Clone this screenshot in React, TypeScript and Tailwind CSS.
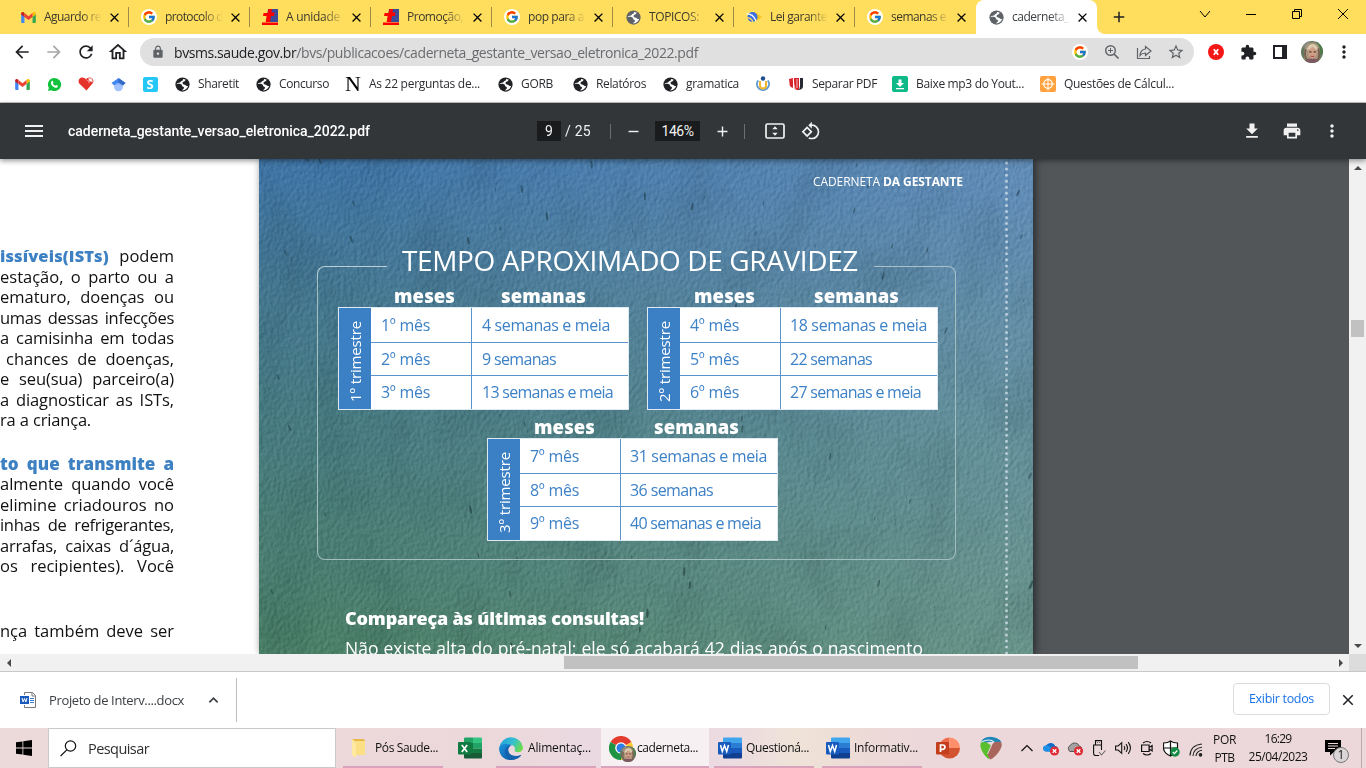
import { useLayoutEffect, useRef, useState, type ReactNode } from "react";
import {
  MdAdd, MdArrowBack, MdArrowForward, MdClose, MdExtension, MdFileDownload, MdLock, MdMenu,
  MdMoreVert, MdOutlineHome, MdPrint, MdRefresh, MdRemove, MdStarBorder,
} from "react-icons/md";
import { FcGoogle } from "react-icons/fc";

/* Text whose letter spacing is computed so that it fills a given width. */
function Fit({ w, className = "", children }: { w: number; className?: string; children: ReactNode }) {
  const ref = useRef<HTMLSpanElement>(null);
  const [spacing, setSpacing] = useState(0);
  useLayoutEffect(() => {
    const el = ref.current;
    if (!el) return;
    el.style.letterSpacing = "0px";
    const natural = el.getBoundingClientRect().width;
    const count = (el.textContent ?? "").length;
    setSpacing((w - natural) / Math.max(1, count));
    el.style.letterSpacing = `${(w - natural) / Math.max(1, count)}px`;
  }, [w]);
  return (
    <span ref={ref} className={`inline-block shrink-0 whitespace-pre ${className}`} style={{ letterSpacing: `${spacing}px` }}>
      {children}
    </span>
  );
}

function Slot({ className, children }: { className: string; children?: ReactNode }) {
  return <div className={`flex shrink-0 items-center justify-center ${className}`}>{children}</div>;
}

/* ---------- icons ---------- */
const Gmail = ({ className = "h-[11px] w-[15px]" }: { className?: string }) => (
  <svg viewBox="0 0 16 12" className={className}>
    <path d="M0 1.5V11a1 1 0 0 0 1 1h2.6V5z" fill="#4285f4" />
    <path d="M12.4 12H15a1 1 0 0 0 1-1V1.5L12.4 5z" fill="#34a853" />
    <path d="M12.4 1.2V5.4L16 2.7V1.6C16 .2 14.4-.5 13.3.4z" fill="#fbbc04" />
    <path d="M3.6 5.4V1.2L8 4.5l4.4-3.3v4.2L8 8.7z" fill="#ea4335" />
    <path d="M0 1.6v1.1l3.6 2.7V1.2L2.7.4C1.600-.5 0 .2 0 1.6z" fill="#c5221f" />
  </svg>
);
const Globe = ({ className = "h-[15px] w-[15px] text-[#202124]" }: { className?: string }) => (
  <svg viewBox="0 0 16 16" className={className}>
    <circle cx="8" cy="8" r="7.600" fill="currentColor" />
    <path d="M1.600 7.600c2-.5 4.400-.4 5.500.6.900.9.300 1.900 1.500 2.200 1.200.4 1.200 1.300.6 2-.6.6-1.200 1.100-1.700 1.900 3.200.2 5.900-2 6.600-5-1.300.5-2.400.1-3-.8-.7-.9-2.300-.4-2.900-1.400-.5-1.200.5-2.100 1.500-2.200.9-.2 1.100-1.300 1.900-1.900-1-.7-2.100-.9-3.200-.9.5 1.100-.2 1.900-1.500 2.200-1 .2-.5 1.400-1.700 1.600-1.500.3-2.900.3-3.600 1.700z" fill="#fff" />
  </svg>
);
const GoogleDisc = () => (
  <span className="flex h-4 w-4 items-center justify-center rounded-full bg-white"><FcGoogle className="h-[14px] w-[14px]" /></span>
);
const Library = () => (
  <svg viewBox="0 0 16 16" className="h-4 w-4">
    <path d="M6 0h10v13H4z" fill="#3c4a9a" />
    <path d="M6.500 0h3.500l-.5 3.500h3L12 7H9l-1 6H3.700l1-6H1l.6-3H5.700z" fill="#f00" />
    <path d="M0 13.500h16V16H0z" fill="#f00" />
  </svg>
);
const Planet = () => (
  <svg viewBox="0 0 16 16" className="h-4 w-4">
    <path d="M10 4l6 4-6 4z" fill="#f9c21c" />
    <circle cx="6.500" cy="8" r="5" fill="#3b6fe0" />
    <path d="M.5 5Q7 4.500 10 12" stroke="#fff" strokeWidth="1.300" fill="none" />
    <path d="M1 9q4-.5 6 4" stroke="#ffde5d" strokeWidth="1.200" fill="none" />
  </svg>
);
const WhatsApp = () => (
  <svg viewBox="0 0 16 16" className="h-[15px] w-[15px]">
    <path d="M8 1a7 7 0 0 0-6 10.600L1 15l3.500-1A7 7 0 1 0 8 1z" fill="#12c23c" />
    <path d="M5.300 4.300c.5-.4.900-.2 1.100.3l.5 1.200-.7 1q.9 1.900 2.800 2.600l.9-.9 1.600.8c.3.2.2 1.800-1.300 2.100C7.500 11.800 4 8.500 4.200 6c.1-.8.6-1.400 1.100-1.700z" fill="#fff" />
  </svg>
);
const Heart = () => (
  <svg viewBox="0 0 16 16" className="h-4 w-4">
    <path d="M8.500 14.500L1.200 7.500C-.5 5 1.200 1.500 4 1.500c2 0 3 .8 3.700 1.800Q9 1.500 12 1.500c3 .3 4.500 3.500 2.500 6z" fill="#e5322b" />
    <path d="M10.500 1.800l3.500 1 .8 3.200-3.800-.7z" fill="#fff" stroke="#e98b88" strokeWidth=".7" />
    <path d="M8 3.500l3.500 2.500-1.500 1" stroke="#f6b3b0" strokeWidth=".7" fill="none" />
  </svg>
);
const Scholar = () => (
  <svg viewBox="0 0 16 16" className="h-[15px] w-[15px]">
    <circle cx="8" cy="10.500" r="4.700" fill="#a0c3ff" />
    <path d="M8 1l7.500 5.500L12.500 9Q8 4 3.500 9L.5 6.500z" fill="#4285f4" />
    <path d="M8 1l7.500 5.500L12.500 9 8 6z" fill="#356ac3" />
    <path d="M3.500 9Q8 4.500 12.500 9q-4.500-2.500-9 0z" fill="#76a7fa" />
  </svg>
);
const Ship = () => (
  <svg viewBox="0 0 16 16" className="h-4 w-4">
    <path d="M3.200 4.500a6 6 0 1 0 9.600 0" fill="none" stroke="#5f9bd0" strokeWidth="2" />
    <path d="M5 5v4.500a3 3 0 0 0 6 0V5" stroke="#f2b52c" strokeWidth="1.900" fill="none" />
    <circle cx="8" cy="2.500" r="2.200" fill="#1f4f92" />
  </svg>
);
const RedBooks = () => (
  <svg viewBox="0 0 16 16" className="h-4 w-4">
    <path d="M1 3l4-1v10q-4-1-3.500-5zM6 2h5v12q-4 .5-5-2z" fill="#d8232a" />
    <path d="M12 2h3v9q-1 3-5 3 2-1 2-4z" fill="#252a33" />
    <path d="M5.200 3q.5 7 2 10M9 3v9" stroke="#fff" strokeWidth=".7" fill="none" />
  </svg>
);
const WordIcon = () => (
  <svg viewBox="0 0 24 24" className="h-6 w-6">
    <path d="M6 1.500h17a1 1 0 0 1 1 1v5H5v-5a1 1 0 0 1 1-1z" fill="#41a5ee" />
    <path d="M5 7h19v5H5z" fill="#2b7cd3" />
    <path d="M5 12h19v5H5z" fill="#185abd" />
    <path d="M5 17h19v4.500a1 1 0 0 1-1 1H6a1 1 0 0 1-1-1z" fill="#103f91" />
    <rect x="0" y="6" width="13" height="12.500" rx="1" fill="#185abd" />
    <path d="M2.500 9l1.800 6.500L6.500 9.500l2.200 6L10.500 9" stroke="#fff" strokeWidth="1.500" fill="none" />
  </svg>
);
const ExcelIcon = () => (
  <svg viewBox="0 0 24 24" className="h-6 w-6">
    <path d="M7 1.500h8v5.500H6V2.500a1 1 0 0 1 1-1z" fill="#21a366" />
    <path d="M15 1.500h8a1 1 0 0 1 1 1V7h-9z" fill="#33c481" />
    <path d="M6 7h9v10H6z" fill="#107c41" />
    <path d="M15 7h9v5.500h-9z" fill="#21a366" />
    <path d="M15 12.500h9V17h-9z" fill="#107c41" />
    <path d="M6 17h18v4.500a1 1 0 0 1-1 1H7a1 1 0 0 1-1-1z" fill="#185c37" />
    <rect x="0" y="6" width="13" height="12.500" rx="1" fill="#107c41" />
    <path d="M3.800 9l5.400 7M9.200 9l-5.400 7" stroke="#fff" strokeWidth="1.700" />
  </svg>
);
const EdgeIcon = () => (
  <svg viewBox="0 0 24 24" className="h-6 w-6">
    <defs>
      <linearGradient id="edgeTop" x1="0" y1=".2" x2="1" y2=".6"><stop stopColor="#239ddd" /><stop offset=".55" stopColor="#35c1cf" /><stop offset="1" stopColor="#6edb4a" /></linearGradient>
      <linearGradient id="edgeBottom" x1="0" y1="0" x2="1" y2="1"><stop stopColor="#1a92dd" /><stop offset="1" stopColor="#0c4f98" /></linearGradient>
    </defs>
    <path d="M.2 12A12 12 0 0 1 24 11.500c0 4-4 5.500-7.500 4.300-1.500-.6-.8-1.500-.5-2.500C16.500 8 6 5 .2 12z" fill="url(#edgeTop)" />
    <path d="M0 12.500C1 7 9 6.500 13 9.500c-4 0-5 4-3 7.500 2.500 4 8 4.500 12.500 1.800C16 27 1 26 0 12.500z" fill="url(#edgeBottom)" />
    <path d="M8 10.500C3 17 8 23.500 14.500 23.700c4-.4 6.500-2.500 8-4.900-6 2.500-12.500 1-13.200-4-.2-2 .7-3.800 2.500-5.200z" fill="#1461ad" />
  </svg>
);
const Face = ({ className }: { className: string }) => (
  <svg viewBox="0 0 24 24" className={className}>
    <clipPath id="faceClip"><circle cx="12" cy="12" r="12" /></clipPath>
    <g clipPath="url(#faceClip)">
      <path d="M0 0h24v24H0z" fill="#66785c" />
      <path d="M0 0h9v7H0z" fill="#858a82" /><path d="M17 0h7v14h-7z" fill="#4c7a4a" />
      <path d="M3.500 18Q2 2 12 1.500T20.500 17L19 22H5z" fill="#a8937c" />
      <path d="M3 24q1-5 9-5t9 5z" fill="#7b5862" />
      <ellipse cx="12.500" cy="12.500" rx="4.600" ry="6.800" fill="#cf9f86" />
      <path d="M6 10q3-8 8-6.500 4 1 4.500 6.500-4-1.500-6-4-2 3-6.500 4z" fill="#dccdb0" />
      <path d="M9 11.800h2.400M13.800 11.800h2.400" stroke="#4b3832" strokeWidth="1.400" />
      <path d="M10.500 16.200q2 1.500 4 0" stroke="#a0464d" strokeWidth="1.200" fill="none" />
      <path d="M5 9Q3 18 7 21M19 8q2 9-1 13" stroke="#715c4d" strokeWidth="1.800" fill="none" />
    </g>
  </svg>
);
const ChromeIcon = () => (
  <div className="relative h-6 w-6 shrink-0">
    <svg viewBox="0 0 24 24" className="h-6 w-6">
      <path d="M12 12L1.600 6A12 12 0 0 1 22.400 6z" fill="#e33b2e" />
      <path d="M12 12l10.400-6A12 12 0 0 1 12 24z" fill="#fcc934" />
      <path d="M12 12v12A12 12 0 0 1 1.600 6z" fill="#1e9443" />
      <circle cx="12" cy="12" r="5.800" fill="#fff" />
      <circle cx="12" cy="12" r="4.500" fill="#2f7de9" />
    </svg>
    <Face className="absolute left-[11px] top-[10px] h-4 w-4" />
  </div>
);
const PowerPoint = () => (
  <svg viewBox="0 0 24 24" className="h-6 w-6">
    <path d="M13.500 1.500A10.500 10.500 0 0 0 3 12l10.500 1z" fill="#ed6c47" />
    <path d="M13.500 1.500A10.500 10.500 0 0 1 24 12l-10.500 1z" fill="#ff8f6b" />
    <path d="M3 12a10.500 10.500 0 0 0 21 0z" fill="#d35230" />
    <rect x="0" y="6" width="13" height="12.500" rx="1" fill="#c43e1c" />
    <path d="M4.500 16V9h2.300a2 2 0 0 1 0 4.300H4.500" stroke="#fff" strokeWidth="1.700" fill="none" />
  </svg>
);
const Reaper = () => (
  <svg viewBox="0 0 24 24" className="h-6 w-6">
    <path d="M2 6Q4 1 11 .8 19 1 22.500 6L18 8Q12 3.500 5 8z" fill="#1d87b8" />
    <path d="M1.700 6.500Q.5 10 2.500 14q3 6.500 8 9.500L10 14 12 9.500 7 6z" fill="#5abf2f" />
    <path d="M22.300 6.500Q16 4 12 9.500L8.500 17.500q.5 4 3 6Q18 20 21.500 13q2-4 .8-6.500z" fill="#a9655c" />
    <path d="M2.500 6q8-4 12.500 0" stroke="#e9eef0" strokeWidth="1.200" fill="none" />
    <path d="M13 8.500L8.500 18" stroke="#e9e2e0" strokeWidth=".9" />
  </svg>
);
const Cloud = ({ kind }: { kind: "blue" | "gray" }) => (
  <svg viewBox="0 0 18 16" className="h-4 w-[18px]">
    <path d="M4 11.500a3.500 3.500 0 0 1 0-6Q6 2.500 9.500 3q3 .6 3.600 3 3 .5 2.700 3.500-.5 2-2 2z" fill={kind === "blue" ? "#0f6cc9" : "#a5a2a2"} stroke={kind === "blue" ? "none" : "#555"} strokeWidth="1" />
    {kind === "blue" && <path d="M4 5.500q3-.5 5 2l7 2q0 2-2 2H4a3 3 0 0 1 0-6z" fill="#1e90e5" />}
    <circle cx="12.500" cy="11" r="4.600" fill="#e02b35" />
    <path d="M10.700 9.200l3.600 3.600m0-3.600l-3.600 3.600" stroke="#fff" strokeWidth="1.300" />
  </svg>
);
const DocIcon = () => (
  <svg viewBox="0 0 16 16" className="h-4 w-4">
    <path d="M4.500 3V.5h8L15.500 3.500v12h-11V13" fill="#fff" stroke="#7a7a7a" />
    <path d="M12 .5v3.500h3.500" fill="none" stroke="#7a7a7a" />
    <path d="M10 6.500h4M10 8.500h4M10 10.500h4" stroke="#3b7dd8" />
    <path d="M0 4h9v8H0z" fill="#185abd" />
    <path d="M2 6l1.100 4L4.500 6.500 5.900 10 7 6" stroke="#fff" fill="none" />
  </svg>
);

/* ---------- browser chrome ---------- */
const tabs: { icon: ReactNode; label: string; w: number }[] = [
  { icon: <Gmail />, label: "Aguardo re", w: 57 },
  { icon: <GoogleDisc />, label: "protocolo d", w: 58 },
  { icon: <Library />, label: "A unidade", w: 54 },
  { icon: <Library />, label: "Promoção,", w: 56 },
  { icon: <GoogleDisc />, label: "pop para a", w: 56 },
  { icon: <Globe className="h-[15px] w-[15px] text-[#5f6368]" />, label: "TOPICOS:", w: 50 },
  { icon: <Planet />, label: "Lei garante", w: 57 },
  { icon: <GoogleDisc />, label: "semanas e", w: 55 },
];

function TabStrip() {
  return (
    <div className="flex h-[34px] items-stretch bg-[#ffde5d] pl-2 text-[12px] text-[#3c3a2c]">
      {tabs.map((t, i) => (
        <div key={t.label} className="flex w-[121px] shrink-0 items-center pl-3">
          <Slot className="w-4">{t.icon}</Slot>
          <div className="ml-2 w-[58px] [mask-image:linear-gradient(90deg,#000_65%,transparent)]">
            <Fit w={t.w}>{t.label}</Fit>
          </div>
          <Slot className="ml-1 w-4"><MdClose className="h-[15px] w-[15px] text-black" /></Slot>
          <div className={i < 7 ? "ml-auto h-5 w-px bg-[#9c8a45]" : "hidden"} />
        </div>
      ))}
      <div className="flex w-[121px] shrink-0 items-center rounded-t-lg bg-white pl-3 text-[#3c4043]">
        <Slot className="w-4"><Globe className="h-[15px] w-[15px] text-[#5f6368]" /></Slot>
        <div className="ml-2 w-[58px] [mask-image:linear-gradient(90deg,#000_65%,transparent)]">
          <Fit w={57}>caderneta_</Fit>
        </div>
        <Slot className="ml-1 w-4"><MdClose className="h-[15px] w-[15px] text-black" /></Slot>
      </div>
      <div className="flex w-2 items-end bg-white"><div className="h-full w-full rounded-bl-lg bg-[#ffde5d]" /></div>
      <Slot className="w-7"><MdAdd className="h-[18px] w-[18px] text-[#202124]" /></Slot>
      <div className="ml-auto flex h-7 items-center text-black">
        <Slot className="w-[46px]"><svg viewBox="0 0 12 12" className="h-3 w-3"><path d="M1 3l5 6 5-6" fill="none" stroke="currentColor" /></svg></Slot>
        <Slot className="w-[46px]"><div className="h-px w-[10px] bg-black" /></Slot>
        <Slot className="w-[46px]"><svg viewBox="0 0 12 12" className="h-3 w-3"><path d="M3.500 3.500V1.500h7v7H8.500M1.500 3.500h7v7h-7z" fill="none" stroke="currentColor" /></svg></Slot>
        <Slot className="w-[46px]"><svg viewBox="0 0 12 12" className="h-3 w-3"><path d="M1 1l10 10M11 1L1 11" fill="none" stroke="currentColor" /></svg></Slot>
      </div>
    </div>
  );
}

function AddressBar() {
  return (
    <div className="flex h-9 items-center bg-white pl-1.5 text-[#202124]">
      <Slot className="w-8"><MdArrowBack className="h-5 w-5" /></Slot>
      <Slot className="w-8"><MdArrowForward className="h-5 w-5 text-[#a5a7a9]" /></Slot>
      <Slot className="w-8"><MdRefresh className="h-5 w-5" /></Slot>
      <Slot className="w-8"><MdOutlineHome className="h-[22px] w-[22px]" /></Slot>
      <div className="ml-1.5 mr-1.5 flex h-7 w-[1054px] items-center rounded-full bg-[#e0e0e0] pl-[11px] text-[14px]">
        <MdLock className="h-[14px] w-[14px] text-[#5f6368]" />
        <Fit w={524} className="ml-[9px] text-[#6a6c6f]"><span className="text-[#202124]">bvsms.saude.gov.br</span>/bvs/publicacoes/caderneta_gestante_versao_eletronica_2022.pdf</Fit>
        <div className="ml-auto mr-0.5 flex text-[#5f6368]">
          <Slot className="w-8"><GoogleDisc /></Slot>
          <Slot className="w-8"><svg viewBox="0 0 16 16" className="h-4 w-4" fill="none" stroke="currentColor"><circle cx="6.500" cy="6.500" r="4.800" strokeWidth="1.400" /><path d="M10 10l4.500 4.500" strokeWidth="1.700" /><path d="M6.500 4v5M4 6.500h5" /></svg></Slot>
          <Slot className="w-8"><svg viewBox="0 0 16 16" className="h-4 w-4" fill="none" stroke="currentColor" strokeWidth="1.200"><path d="M1.500 4v10.500h12V12" /><path d="M9.500 2.500L15 7l-5.500 4.500V9Q6 9 4 11.500 4.500 5.500 9.500 5z" /></svg></Slot>
          <Slot className="w-8"><MdStarBorder className="h-[18px] w-[18px]" /></Slot>
        </div>
      </div>
      <Slot className="w-8"><svg viewBox="0 0 16 16" className="h-4 w-4"><circle cx="8" cy="8" r="8" fill="#f31717" /><path d="M5.800 5.300l4.400 5.400m0-5.400l-4.400 5.400" stroke="#fff" strokeWidth="1.800" /></svg></Slot>
      <Slot className="w-8"><MdExtension className="h-[17px] w-[17px]" /></Slot>
      <Slot className="w-8"><svg viewBox="0 0 14 14" className="h-[14px] w-[14px]"><path d="M1 1h12v12H1z" fill="#fff" stroke="currentColor" strokeWidth="2" /><path d="M9 1h4v12H9z" fill="currentColor" /></svg></Slot>
      <Slot className="w-8"><Face className="h-[22px] w-[22px]" /></Slot>
      <Slot className="w-8"><MdMoreVert className="h-5 w-5" /></Slot>
    </div>
  );
}

function Bookmark({ icon, label, w, className }: { icon: ReactNode; label: string; w: number; className: string }) {
  return (
    <div className={`flex shrink-0 items-center ${className}`}>
      <Slot className="w-4">{icon}</Slot>
      <Fit w={w} className="ml-2">{label}</Fit>
    </div>
  );
}

function BookmarkBar() {
  return (
    <div className="flex h-8 items-center bg-white pb-1 pl-1.5 text-[12px] text-[#2d2e31]">
      <Slot className="w-8"><Gmail /></Slot>
      <Slot className="w-8"><WhatsApp /></Slot>
      <Slot className="w-8"><Heart /></Slot>
      <Slot className="w-8"><Scholar /></Slot>
      <Slot className="w-8"><span className="flex h-[15px] w-[15px] items-center justify-center rounded-[2px] bg-[#25c7f7] text-[13px] font-bold leading-none text-white">S</span></Slot>
      <Bookmark className="ml-2 w-[81px]" icon={<Globe />} label="Sharetit" w={41} />
      <Bookmark className="w-[90px]" icon={<Globe />} label="Concurso" w={50} />
      <Bookmark className="w-[152px]" icon={<span className="font-['Liberation_Serif',serif] text-[22px] leading-none text-black">N</span>} label="As 22 perguntas de..." w={111} />
      <Bookmark className="w-[75px]" icon={<Globe />} label="GORB" w={32} />
      <Bookmark className="w-[90px]" icon={<Globe />} label="Relatóros" w={50} />
      <Bookmark className="w-[93px]" icon={<Globe />} label="gramatica" w={53} />
      <div className="w-[33px] shrink-0"><Ship /></div>
      <Bookmark className="w-[104px]" icon={<RedBooks />} label="Separar PDF" w={65} />
      <Bookmark className="w-[148px]" icon={<svg viewBox="0 0 16 16" className="h-4 w-4"><rect width="16" height="16" rx="2" fill="#0fb988" /><path d="M6.500 3.500h3V7H12l-4 4-4-4h2.500zM4 12h8v1.300H4z" fill="#fff" /></svg>} label="Baixe mp3 do Yout..." w={108} />
      <Bookmark className="" icon={<svg viewBox="0 0 16 16" className="h-4 w-4"><rect width="16" height="16" rx="2" fill="#ffa13c" /><path d="M8 1.500v13M1.500 8h13" stroke="#fff" /><circle cx="8" cy="8" r="4.300" fill="none" stroke="#fff" strokeWidth="1.200" /></svg>} label="Questões de Cálcul..." w={110} />
    </div>
  );
}

/* ---------- PDF viewer ---------- */
function PdfToolbar() {
  return (
    <div className="relative z-10 flex h-14 items-center bg-[#323639] font-['Roboto',sans-serif] text-[14px] text-[#f1f1f1] shadow-[0_2px_5px_rgba(0,0,0,0.4)]">
      <Slot className="ml-[22px] w-6"><MdMenu className="h-6 w-6" /></Slot>
      <Fit w={302} className="ml-[22px] font-medium text-white">caderneta_gestante_versao_eletronica_2022.pdf</Fit>
      <Slot className="ml-[167px] h-5 w-6 bg-[#191b1c]">9</Slot>
      <Fit w={26} className="ml-1">/ 25</Fit>
      <div className="ml-[19px] h-[15px] w-px bg-[#6c6f71]" />
      <Slot className="ml-[10px] w-6"><MdRemove className="h-[17px] w-[17px]" /></Slot>
      <Slot className="ml-[10px] h-5 w-[45px] bg-[#191b1c]"><Fit w={32}>146%</Fit></Slot>
      <Slot className="ml-[10px] w-6"><MdAdd className="h-[17px] w-[17px]" /></Slot>
      <div className="ml-[10px] h-[15px] w-px bg-[#6c6f71]" />
      <Slot className="ml-[18px] w-6">
        <svg viewBox="0 0 20 16" className="h-4 w-5"><rect x="1" y="1" width="18" height="14" rx="1.500" fill="none" stroke="currentColor" strokeWidth="1.700" /><path d="M7.300 6.300L10 3.300l2.700 3zM7.300 9.700l2.700 3 2.700-3z" fill="currentColor" /></svg>
      </Slot>
      <Slot className="ml-3 w-6">
        <svg viewBox="0 0 24 24" className="h-5 w-5" fill="currentColor"><path d="M7.340 6.410L.860 12.900l6.490 6.480 6.490-6.480-6.500-6.490zM3.690 12.900l3.660-3.660L11 12.900l-3.660 3.660-3.650-3.660zm15.670-6.260A8.950 8.950 0 0 0 13 4V.76L8.760 5 13 9.240V6c1.790 0 3.580.68 4.950 2.050a7.007 7.007 0 0 1 0 9.900 6.973 6.973 0 0 1-7.790 1.440l-1.490 1.490C10.020 21.620 11.510 22 13 22c2.300 0 4.610-.88 6.360-2.640a8.980 8.980 0 0 0 0-12.720z" /></svg>
      </Slot>
      <Slot className="ml-auto w-10"><MdFileDownload className="h-5 w-5" /></Slot>
      <Slot className="w-10"><MdPrint className="h-5 w-5" /></Slot>
      <Slot className="mr-[14px] w-10"><MdMoreVert className="h-5 w-5" /></Slot>
    </div>
  );
}

function Line({ children, className = "w-[174px]" }: { children: ReactNode; className?: string }) {
  return <div className={`h-[20.500px] whitespace-nowrap leading-[20.500px] [text-align-last:justify] ${className}`}>{children}</div>;
}

function LeftPage() {
  return (
    <div className="w-[259px] shrink-0 overflow-hidden bg-white pt-[87px] text-[16.500px] text-[#111]">
      <Line><b className="font-extrabold tracking-[0.1px] text-[#3d81c3]">issíveis(ISTs)</b> podem</Line>
      <Line>estação, o parto ou a</Line>
      <Line>ematuro, doenças ou</Line>
      <Line className="w-[174px] tracking-[-0.3px]">umas dessas infecções</Line>
      <Line className="w-[174px] tracking-[-0.1px]">a camisinha em todas</Line>
      <Line className="ml-1.5 w-[168px]">chances de doenças,</Line>
      <Line className="w-[174px] tracking-[-0.1px]">e seu(sua) parceiro(a)</Line>
      <Line className="w-[174px] tracking-[-0.1px]">a diagnosticar as ISTs,</Line>
      <Line className="w-[91px] tracking-[-0.2px]">ra a criança.</Line>
      <div className="h-[23px]" />
      <Line><b className="text-[17px] font-extrabold text-[#3d81c3]">to que transmite a</b></Line>
      <Line>almente quando você</Line>
      <Line>elimine criadouros no</Line>
      <Line className="w-[174px] tracking-[-0.3px]">inhas de refrigerantes,</Line>
      <Line className="w-[174px] tracking-[-0.2px]">arrafas, caixas d´água,</Line>
      <Line>os recipientes). Você</Line>
      <div className="h-[44px]" />
      <Line>nça também deve ser</Line>
    </div>
  );
}

const specks = Array.from({ length: 190 }, (_, i) => {
  const a = Math.abs(Math.sin(i * 12.9898 + 4.1) * 43758.5453) % 1;
  const b = Math.abs(Math.sin(i * 78.233 + 1.7) * 24634.6345) % 1;
  const c = Math.abs(Math.sin(i * 39.425 + 2.3) * 11731.117) % 1;
  return { x: a * 774, y: b * 495, h: 0.8 + c * c * 4, o: 0.15 + c * 0.35, r: a * 50 - 25 };
});

function Wall() {
  return (
    <svg viewBox="0 0 774 495" className="absolute inset-0 h-[495px] w-[774px]">
      <defs>
        <linearGradient id="wallDown" x1="0" y1="0" x2="-.08" y2="1">
          <stop stopColor="#4075a6" /><stop offset=".25" stopColor="#457892" /><stop offset=".5" stopColor="#477b82" /><stop offset=".75" stopColor="#4a7d74" /><stop offset="1" stopColor="#4c8168" />
        </linearGradient>
        <linearGradient id="wallAcross"><stop offset=".1" stopColor="#c4d4e6" stopOpacity="0" /><stop offset="1" stopColor="#c4d4e6" stopOpacity=".25" /></linearGradient>
        <filter id="plaster" x="0" y="0" width="100%" height="100%" colorInterpolationFilters="sRGB">
          <feTurbulence type="fractalNoise" baseFrequency=".3 .22" numOctaves="3" seed="7" result="n" />
          <feDiffuseLighting in="n" surfaceScale="1.1" diffuseConstant="1" lightingColor="#fff"><feDistantLight azimuth="215" elevation="30" /></feDiffuseLighting>
        </filter>
        <filter id="stains" x="0" y="0" width="100%" height="100%" colorInterpolationFilters="sRGB">
          <feTurbulence type="fractalNoise" baseFrequency=".02 .014" numOctaves="4" seed="3" />
          <feColorMatrix values="0 0 0 0 0  0 0 0 0 .1  0 0 0 0 .12  1 0 0 0 -.45" />
        </filter>
      </defs>
      <rect width="774" height="495" fill="url(#wallDown)" />
      <rect width="774" height="495" fill="url(#wallAcross)" />
      <rect width="774" height="495" filter="url(#stains)" opacity=".22" />
      <rect width="774" height="495" filter="url(#plaster)" className="opacity-30 mix-blend-soft-light" />
      {specks.map((s, i) => (
        <ellipse key={i} cx={s.x} cy={s.y} rx={s.h / 4} ry={s.h} fill="#10262c" opacity={s.o} transform={`rotate(${s.r} ${s.x} ${s.y})`} />
      ))}
      <path d="M747.500 -2V495" stroke="#d5e2ec" strokeOpacity=".75" strokeWidth="3" strokeLinecap="round" strokeDasharray="0 6.050" />
    </svg>
  );
}

type Row = [string, string, number];

function Trimester({ label, rows, className = "", heads = "gap-[59px] pl-[47px]", weeks = "pl-[9px]" }: { label: string; rows: Row[]; className?: string; heads?: string; weeks?: string }) {
  return (
    <div className={`w-[291px] ${className}`}>
      <div className={`flex h-[21px] items-center pb-px text-[18.500px] font-extrabold leading-none text-white ${heads}`}>
        <Fit w={61}>meses</Fit>
        <Fit w={85}>semanas</Fit>
      </div>
      <div className="flex h-[103px] border border-[#dfe9f2] bg-white text-[16px] text-[#3d81c6]">
        <div className="flex w-8 shrink-0 items-center justify-center bg-[#3b7fc4] text-white">
          <span className="rotate-180 pb-[5px] text-[15px] leading-none tracking-[-0.15px] [writing-mode:vertical-rl]">{label}</span>
        </div>
        <div className="flex grow flex-col">
          {rows.map(([m, s, w], i) => (
            <div key={m} className={`flex items-stretch border-[#5b93cd] ${i === 0 ? "h-[35px] border-b" : i === 1 ? "h-[33px] border-b" : "h-[33px]"}`}>
              <div className="flex w-[101px] items-center border-r border-[#5b93cd] pb-px pl-[10px]"><Fit w={49}>{m}</Fit></div>
              <div className={`flex items-center pb-px ${weeks}`}><Fit w={w}>{s}</Fit></div>
            </div>
          ))}
        </div>
      </div>
    </div>
  );
}

function RightPage() {
  return (
    <div className="relative h-[495px] w-[774px] shrink-0 overflow-hidden shadow-[2px_0_8px_rgba(0,0,0,0.55)]">
      <Wall />
      <div className="relative text-white">
        <div className="flex h-[46px] items-center justify-end pr-[70px] text-[12px]">
          <Fit w={150}>CADERNETA <b>DA GESTANTE</b></Fit>
        </div>
        <div className="ml-[58px] mt-[38px] w-[639px]">
          <div className="flex h-9 items-end">
            <div className="h-[13px] w-[70px] rounded-tl-lg border-l border-t border-[#b9cfd6]" />
            <Fit w={456} className="ml-[15px] pb-px text-[28px] font-normal leading-9">TEMPO APROXIMADO DE GRAVIDEZ</Fit>
            <div className="ml-4 h-[13px] grow rounded-tr-lg border-r border-t border-[#a9c0cd]" />
          </div>
          <div className="h-[281px] rounded-b-lg border-x border-b border-[#a3bfbf] pt-[7px]">
            <div className="flex gap-[18px] pl-5">
              <Trimester heads="gap-[46px] pl-[56px]" weeks="pl-[10px]" label="1º trimestre" rows={[["1º mês", "4 semanas e meia", 128], ["2º mês", "9 semanas", 74], ["3º mês", "13 semanas e meia", 131]]} />
              <Trimester label="2º trimestre" rows={[["4º mês", "18 semanas e meia", 137], ["5º mês", "22 semanas", 82], ["6º mês", "27 semanas e meia", 131]]} />
            </div>
            <Trimester className="ml-[169px] mt-[7px]" label="3º trimestre" rows={[["7º mês", "31 semanas e meia", 137], ["8º mês", "36 semanas", 83], ["9º mês", "40 semanas e meia", 131]]} />
          </div>
        </div>
        <div className="ml-[86px] mt-[45px] h-[26px] text-[18px] font-extrabold leading-[26px]"><Fit w={299}>Compareça às últimas consultas!</Fit></div>
        <div className="ml-[86px] mt-1 w-[578px] whitespace-nowrap text-[17.500px] leading-[26px] [text-align-last:justify]">Não existe alta do pré-natal: ele só acabará 42 dias após o nascimento</div>
      </div>
    </div>
  );
}

function Arrow({ className }: { className: string }) {
  return <svg viewBox="0 0 8 8" className={`h-2 w-2 ${className}`}><path d="M0 6l4-4 4 4z" fill="#4a4a4a" /></svg>;
}

function Viewer() {
  return (
    <div>
      <div className="flex h-[495px] overflow-hidden">
        <div className="flex w-[1349px] overflow-hidden bg-[#525659] font-['Open_Sans',sans-serif]">
          <LeftPage />
          <RightPage />
        </div>
        <div className="flex w-[17px] flex-col items-center bg-[#f1f1f1]">
          <Slot className="h-[17px]"><Arrow className="" /></Slot>
          <div className="mt-36 h-[17px] w-[13px] bg-[#c1c1c1]" />
          <Slot className="mt-auto h-[17px]"><Arrow className="rotate-180" /></Slot>
        </div>
      </div>
      <div className="flex h-[17px] items-center bg-[#f1f1f1]">
        <Slot className="w-[17px]"><Arrow className="-rotate-90" /></Slot>
        <div className="ml-[547px] h-[13px] w-[574px] bg-[#c1c1c1]" />
        <Slot className="ml-auto w-[17px]"><Arrow className="rotate-90" /></Slot>
        <div className="h-[17px] w-[17px] bg-[#dcdcdc]" />
      </div>
    </div>
  );
}

function DownloadShelf() {
  return (
    <div className="flex h-[57px] items-center border-t border-[#c8c8c8] bg-white pl-5 pr-[9px] text-[#3c4043]">
      <DocIcon />
      <Fit w={135} className="ml-[13px] pt-px text-[13px]">Projeto de Interv....docx</Fit>
      <svg viewBox="0 0 12 8" className="ml-6 h-2 w-[11px]"><path d="M1.500 6.500L6 2l4.500 4.500" fill="none" stroke="#3c4043" strokeWidth="1.900" /></svg>
      <div className="ml-[17px] h-11 w-px bg-[#bdbdbd]" />
      <div className="mb-0.5 ml-auto flex h-8 w-[97px] items-center justify-center rounded border border-[#dadce0] text-[12.500px] font-medium text-[#1a73e8]"><Fit w={65}>Exibir todos</Fit></div>
      <MdClose className="ml-[9px] h-[18px] w-[18px] text-[#202124]" />
    </div>
  );
}

function Task({ icon, label, w, className = "w-[100px]", gap = "ml-[5px]" }: { icon: ReactNode; label: string; w: number; className?: string; gap?: string }) {
  return (
    <div className={`flex h-10 shrink-0 items-center border-b-2 border-[#dba3bb] pt-0.5 ${className}`}>
      {icon}
      <Fit w={w} className={gap}>{label}</Fit>
    </div>
  );
}

function Taskbar() {
  return (
    <div className="flex h-10 items-center bg-[#ecd9da] bg-[linear-gradient(90deg,#ecd9da_0%,#ecd8da_35%,#ead9e0_42%,#ecdbe0_54%,#efe3d8_58%,#eddcd6_62%,#ecd8da_67%)] text-[12px] text-[#111]">
      <Slot className="w-12"><svg viewBox="0 0 16 16" className="h-4 w-4"><path d="M0 2.300l6.500-.9v6.200H0zM7.300 1.300L16 0v7.600H7.300zM0 8.400h6.500v6.200L0 13.700zM7.300 8.400H16V16l-8.700-1.300z" /></svg></Slot>
      <div className="flex h-10 w-72 shrink-0 items-center border border-[#c9c9c9] bg-white pl-[11px] text-[#2f2f2f]">
        <svg viewBox="0 0 17 17" className="h-[17px] w-[17px]"><circle cx="10.500" cy="6" r="5.200" fill="none" stroke="#111" strokeWidth="1.200" /><path d="M6.800 9.800L.6 16" stroke="#111" strokeWidth="1.200" /></svg>
        <Fit w={61} className="ml-[11px] pt-px text-[14.500px]">Pesquisar</Fit>
      </div>
      <Task className="ml-[7px] w-[100px] pl-2" gap="ml-[9px]" icon={<svg viewBox="0 0 15 20" className="h-5 w-[15px] shrink-0"><path d="M1 1h11l2 1v15H1z" fill="#e9b84a" /><path d="M5 3h9v14H5z" fill="#fbdf85" /><path d="M1 1l4 3v16l-4-3z" fill="#ffe9a1" /></svg>} label="Pós Saude..." w={63} />
      <Slot className="w-[53px]"><ExcelIcon /></Slot>
      <Task className="w-[100px] pl-[3px]" icon={<EdgeIcon />} label="Alimentaç..." w={63} />
      <Task className="ml-[5px] w-[108px] bg-[#f7f0f2] pl-2" gap="ml-1" icon={<ChromeIcon />} label="caderneta..." w={61} />
      <Task className="ml-[5px] w-[100px] pl-1" gap="ml-1" icon={<WordIcon />} label="Questioná..." w={63} />
      <Task className="ml-2 w-[100px] pl-1" gap="ml-1" icon={<WordIcon />} label="Informativ..." w={64} />
      <Slot className="w-[52px]"><PowerPoint /></Slot>
      <Slot className="w-[34px]"><Reaper /></Slot>
      <Slot className="ml-[7px] w-6"><svg viewBox="0 0 12 8" className="h-2 w-3"><path d="M.5 7L6 1.500 11.500 7" fill="none" stroke="#111" strokeWidth="1.200" /></svg></Slot>
      <Slot className="w-6"><Cloud kind="blue" /></Slot>
      <Slot className="w-6"><Cloud kind="gray" /></Slot>
      <Slot className="w-6"><svg viewBox="0 0 14 16" className="h-4 w-[14px]" fill="none" stroke="#111" strokeWidth="1.100"><path d="M3.500 5V.6h6V5M5.500 2.500h.5M7.500 2.500h.5M9.500 10V5H1.600v8.500q0 2 2 2h3.500" /><path d="M7 12l2.500 3L13.500 10.500" stroke="#666" /></svg></Slot>
      <Slot className="w-6"><svg viewBox="0 0 17 14" className="h-[14px] w-[17px]" fill="none" stroke="#111" strokeWidth="1.100"><path d="M.6 5h2.600l3.500-3.300v10.600L3.200 9H.6zM9 5q1.500 2 0 4M11 3.200q3 3.800 0 7.600M13.200 1.200q4.500 5.800 0 11.600" /></svg></Slot>
      <Slot className="w-6"><svg viewBox="0 0 12 16" className="h-4 w-3" fill="none" stroke="#111" strokeWidth="1.200"><path d="M.6 5h7.500v6.500H.6zM8.100 7.500l3-2v5.500l-3-2M2 3Q6 0 10 3M2 13.500q4 3 8 0" /></svg></Slot>
      <Slot className="w-6"><svg viewBox="0 0 17 17" className="h-[17px] w-[17px]"><path d="M7.500 1Q10 3 14.500 3v5q0 5-7 8-7-3-7-8V3Q5 3 7.500 1z" fill="#fff" stroke="#111" strokeWidth="1.200" /><path d="M7.500 1v15M.5 8h14" stroke="#111" strokeWidth="1.200" /><circle cx="12" cy="12" r="4.700" fill="#118a43" /><path d="M9.800 12l1.600 1.600L14.300 10.500" fill="none" stroke="#fff" strokeWidth="1.300" /></svg></Slot>
      <Slot className="w-[26px]"><svg viewBox="0 0 14 14" className="mt-1 h-[14px] w-[14px]" fill="none" stroke="#222" strokeWidth="1.100"><path d="M1 12.500Q1.500 2 13 1M4 13Q4.500 5 13 4.200M7 13Q7.500 8 13 7.300" /><circle cx="11.500" cy="11.800" r="1.300" fill="#222" /></svg></Slot>
      <div className="flex w-[31px] shrink-0 flex-col items-center pt-px leading-[18px]"><Fit w={23}>POR</Fit><Fit w={20}>PTB</Fit></div>
      <div className="flex w-[76px] shrink-0 flex-col items-center leading-[18px]"><Fit w={27}>16:29</Fit><Fit w={59}>25/04/2023</Fit></div>
      <Slot className="w-[34px]">
        <div className="relative h-4 w-4">
          <svg viewBox="0 0 16 16" className="h-4 w-4"><path d="M0 0h16v12H9l-4 3.500V12H0z" fill="#000" /><path d="M3 3.500h10M3 6h10M3 8.500h7" stroke="#ecd9da" /></svg>
          <span className="absolute left-2 top-[7px] flex h-4 w-4 items-center justify-center rounded-full border border-[#777] bg-[#d9d5d6] text-[12px] leading-none">1</span>
        </div>
      </Slot>
      <div className="ml-[11px] h-10 w-px bg-[#b9a9aa]" />
    </div>
  );
}

export default function App() {
  return (
    <div className="h-[768px] w-[1366px] overflow-hidden bg-white font-['Open_Sans','Noto_Sans',sans-serif] [font-stretch:92%]">
      <TabStrip />
      <AddressBar />
      <BookmarkBar />
      <div className="h-px bg-[#c4c4c4]" />
      <PdfToolbar />
      <Viewer />
      <DownloadShelf />
      <Taskbar />
    </div>
  );
}
